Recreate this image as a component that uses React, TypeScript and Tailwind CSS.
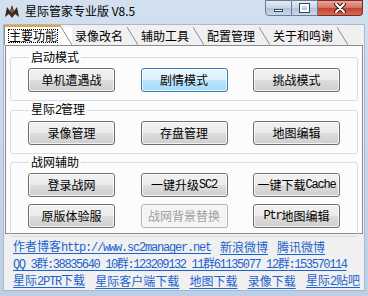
import React from "react";

const cjkFont = "font-['Noto_Sans_CJK_SC',sans-serif]";
const monoFont = "font-['Liberation_Mono','Noto_Sans_CJK_SC',monospace] tracking-[-1.2px]";

// split text into CJK runs and latin runs (latin drawn half-width like SimSun)
function Mixed({ text }: { text: string }) {
  const parts = text.match(/[\u3000-\u9fff\uff00-\uffef]+|[^\u3000-\u9fff\uff00-\uffef]+/g) ?? [];
  return (
    <>
      {parts.map((p, i) =>
        /[\u3000-\u9fff\uff00-\uffef]/.test(p) ? (
          <span key={i} className={cjkFont}>
            {p}
          </span>
        ) : (
          <span key={i} className={monoFont}>
            {p}
          </span>
        )
      )}
    </>
  );
}

function Btn({ label, hot, disabled }: { label: string; hot?: boolean; disabled?: boolean }) {
  let skin =
    "border-[#707070] bg-[linear-gradient(to_bottom,#f2f2f2_0%,#ebebeb_50%,#dddddd_50%,#cfcfcf_100%)] text-black";
  if (hot)
    skin =
      "border-[#3c7fb1] bg-[linear-gradient(to_bottom,#eaf6fd_0%,#d9f0fc_50%,#bee6fd_50%,#a7d9f5_100%)] text-black";
  if (disabled) skin = "border-[#adb2b5] bg-[#f4f4f4] text-[#a0a0a0]";
  return (
    <div
      className={`w-[87px] h-[24px] rounded-[3px] border flex items-center justify-center text-[12px] leading-none whitespace-nowrap shadow-[inset_0_0_0_1px_rgba(255,255,255,0.7)] ${skin}`}
    >
      <Mixed text={label} />
    </div>
  );
}

function Group({ title, rows }: { title: string; rows: { label: string; hot?: boolean; disabled?: boolean }[][] }) {
  return (
    <fieldset className="border border-[#d5dfe5] rounded-[3px] mx-[4px] px-[17px] pb-[8px]">
      <legend className="ml-[1px] px-[2px] text-[12px] leading-[12px] text-black">
        <Mixed text={title} />
      </legend>
      <div className="flex flex-col gap-[7px] pt-[4px]">
        {rows.map((r, i) => (
          <div key={i} className="flex justify-between">
            {r.map((b) => (
              <Btn key={b.label} {...b} />
            ))}
          </div>
        ))}
      </div>
    </fieldset>
  );
}

function Tab({ label, active, first }: { label: string; active?: boolean; first?: boolean }) {
  return (
    <div className="relative flex items-end h-[20px] shrink-0">
      <div
        className={`flex items-center pr-[4px] text-[12px] leading-none whitespace-nowrap ${cjkFont} ${
          first ? "pl-[4px]" : "pl-[3px]"
        } ${
          active
            ? "h-[20px] bg-white border-t-2 border-t-[#e8a33c] border-l border-l-[#898c95]"
            : "h-[18px]"
        }`}
      >
        <span className={active ? "outline-1 outline-dotted outline-black" : ""}>{label}</span>
      </div>
      <svg width="11" height="18" className={`block ${active ? "bg-white" : ""}`}>
        <line x1="0" y1="0" x2="11" y2="18" stroke="#898c95" strokeWidth="1" />
      </svg>
    </div>
  );
}

function LinkText({ text, tight }: { text: string; tight?: boolean }) {
  return (
    <span
      className={`text-[#1d63cf] underline underline-offset-[2px] text-[12px] leading-none whitespace-nowrap ${
        tight ? "[&>span]:tracking-[-1.38px]" : ""
      }`}
    >
      <Mixed text={text} />
    </span>
  );
}

export default function App() {
  return (
    <div className="w-[368px] h-[296px] bg-[linear-gradient(to_bottom,#d2e0ef,#bccfe6)] flex flex-col overflow-hidden">
      {/* title bar */}
      <div className="h-[24px] flex items-start relative shrink-0">
        <svg width="16" height="16" viewBox="0 0 16 16" className="mt-[3px] ml-[4px]">
          <path d="M1 14 L3 4 L6 8 L8 2 L10 8 L13 4 L15 14 L11 11 L8 15 L5 11 Z" fill="#3b2a20" />
          <path d="M6 8 L8 5 L10 8 L8 11 Z" fill="#8a5a3a" />
        </svg>
        <div className={`ml-[5px] mt-[4px] text-[12px] leading-[14px] text-black ${cjkFont}`}>
          星际管家专业版 V8.5
        </div>
        <div className="absolute right-[5px] top-0 flex h-[16px]">
          <div className="w-[27px] h-full rounded-bl-[4px] border border-[#6b7d96] bg-[linear-gradient(to_bottom,#e4ecf6,#c6d4e6_50%,#b0c2da_50%,#c9d8ea)] flex items-center justify-center">
            <div className="w-[9px] h-[3px] bg-white border border-[#3a4a60] mt-[5px]" />
          </div>
          <div className="w-[26px] h-full border-y border-r border-[#6b7d96] bg-[linear-gradient(to_bottom,#e4ecf6,#c6d4e6_50%,#b0c2da_50%,#c9d8ea)] flex items-center justify-center">
            <div className="w-[9px] h-[8px] border-2 border-white outline outline-1 outline-[#3a4a60]" />
          </div>
          <div className="w-[45px] h-full rounded-br-[4px] border-y border-r border-[#7a2a22] bg-[linear-gradient(to_bottom,#e8a79a,#d3705f_50%,#c3412e_50%,#d56a52)] flex items-center justify-center">
            <svg width="12" height="10" viewBox="0 0 12 10">
              <path d="M2 1 L10 9 M10 1 L2 9" stroke="#3a1510" strokeWidth="4" strokeLinecap="round" />
              <path d="M2 1 L10 9 M10 1 L2 9" stroke="#ffffff" strokeWidth="2" strokeLinecap="round" />
            </svg>
          </div>
        </div>
      </div>

      {/* client area */}
      <div className="flex-1 mx-[3px] mb-[5px] bg-[#f0f0f0] border border-[#a9b8cb] flex flex-col">
        <div className="flex items-end h-[20px] shrink-0">
          <Tab label="主要功能" active first />
          <Tab label="录像改名" />
          <Tab label="辅助工具" />
          <Tab label="配置管理" />
          <Tab label="关于和鸣谢" />
        </div>
        <div className="mx-[1px] h-[189px] bg-[#fcfcfc] border border-[#898c95] pt-[5px] flex flex-col gap-[2px] shrink-0">
          <Group
            title="启动模式"
            rows={[[{ label: "单机遭遇战" }, { label: "剧情模式", hot: true }, { label: "挑战模式" }]]}
          />
          <Group title="星际2管理" rows={[[{ label: "录像管理" }, { label: "存盘管理" }, { label: "地图编辑" }]]} />
          <Group
            title="战网辅助"
            rows={[
              [{ label: "登录战网" }, { label: "一键升级SC2" }, { label: "一键下载Cache" }],
              [{ label: "原版体验服" }, { label: "战网背景替换", disabled: true }, { label: "Ptr地图编辑" }],
            ]}
          />
        </div>
        <div className="flex flex-col pl-[9px] pr-[4px] pt-[7px] gap-[5px]">
          <div className="flex gap-[9px] h-[12px] items-center">
            <LinkText text="作者博客http://www.sc2manager.net" />
            <LinkText text="新浪微博" />
            <LinkText text="腾讯微博" />
          </div>
          <div className="flex h-[12px] items-center">
            <LinkText tight text="QQ 3群:38835640 10群:123209132 11群61135077 12群:153570114" />
          </div>
          <div className="flex justify-between h-[12px] items-center">
            <LinkText text="星际2PTR下载" />
            <LinkText text="星际客户端下载" />
            <LinkText text="地图下载" />
            <LinkText text="录像下载" />
            <LinkText text="星际2贴吧" />
          </div>
        </div>
      </div>
    </div>
  );
}
